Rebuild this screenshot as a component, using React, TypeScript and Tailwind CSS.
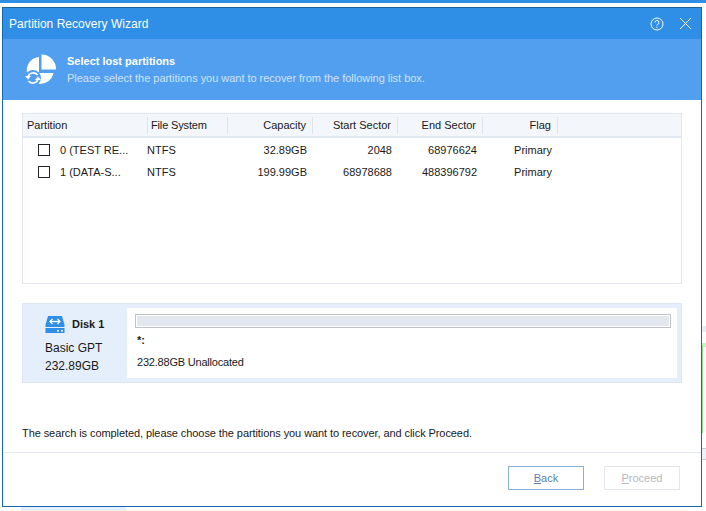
import React from 'react';

const font = 'font-["Liberation_Sans",Arial,sans-serif]';

const columns = [
  { label: 'Partition', width: 'w-[125px]', align: 'text-left pl-[4px]' },
  { label: 'File System', width: 'w-[80px]', align: 'text-left pl-[3px] tracking-[-0.15px]' },
  { label: 'Capacity', width: 'w-[85px]', align: 'text-right pr-[6px]' },
  { label: 'Start Sector', width: 'w-[85px]', align: 'text-right pr-[6px]' },
  { label: 'End Sector', width: 'w-[85px]', align: 'text-right pr-[6px]' },
  { label: 'Flag', width: 'w-[75px]', align: 'text-right pr-[6px]' },
];

const rows = [
  { name: '0 (TEST RE...', fs: 'NTFS', capacity: '32.89GB', start: '2048', end: '68976624', flag: 'Primary' },
  { name: '1 (DATA-S...', fs: 'NTFS', capacity: '199.99GB', start: '68978688', end: '488396792', flag: 'Primary' },
];

const PieIcon = () => (
  <svg width="32" height="32" viewBox="0 0 32 32" fill="none">
    <path d="M14 3 A13.5 13.5 0 1 0 28.5 19 L14 19 Z" fill="#fff" />
    <path d="M16.5 0.5 A14.5 14.5 0 0 1 31 15.5 L16.5 15.5 Z" fill="#fff" />
    <circle cx="8" cy="24" r="8" fill="#529ff0" />
    <path d="M3 22.5 A5.5 5.5 0 0 1 12.5 21" stroke="#fff" strokeWidth="1.6" />
    <path d="M13 25.5 A5.5 5.5 0 0 1 3.5 27" stroke="#fff" strokeWidth="1.6" />
    <path d="M0 22 L6 22 L3 25.5 Z" fill="#fff" />
    <path d="M16 26 L10 26 L13 22.5 Z" fill="#fff" />
  </svg>
);

const DiskIcon = () => (
  <svg width="20" height="17" viewBox="0 0 20 17" fill="none">
    <path d="M3 0 H17 L19.5 9 V11 H0.5 V9 Z" fill="#2f8ee6" />
    <rect x="0.5" y="12" width="19" height="5" fill="#2f8ee6" />
    <path d="M5 5.5 H15" stroke="#fff" strokeWidth="1.3" />
    <path d="M7.5 3 L5 5.5 L7.5 8 M12.5 3 L15 5.5 L12.5 8" stroke="#fff" strokeWidth="1.2" />
    <rect x="12" y="14" width="2" height="1.5" fill="#fff" />
    <rect x="16" y="14" width="2" height="1.5" fill="#fff" />
  </svg>
);

export default function App() {
  return (
    <div className={`relative w-[706px] h-[511px] overflow-hidden bg-white ${font} text-[11px] text-[#1a1a1a]`}>
      {/* windows behind the dialog */}
      <div className="h-[3px] bg-[#2f8ee6]" />
      <div className="absolute right-0 top-[326px] w-[4px] h-[6px] bg-[#e8edf5]" />
      <div className="absolute right-0 top-[343px] w-[4px] h-[90px] border-l border-[#8fe08f] border-t-4 border-t-[#c8f5c8] bg-white" />
      <div className="absolute right-0 top-[448px] w-[4px] h-[12px] border-y border-[#c8cdd5] bg-[#eef1f6]" />
      <div className="absolute left-[21px] bottom-0 w-[105px] h-[4px] bg-[#e6effc]" />

      <div className="relative mt-[4px] ml-[2px] w-[700px] h-[500px] flex flex-col border border-[#1268b3] border-t-[#1c5f9e] bg-white">
        {/* title bar */}
        <div className="h-[31px] shrink-0 flex items-center justify-between bg-[#2f8ee6] pl-[6px] pr-[9px] text-white">
          <span className="text-[12px] tracking-[0.03px]">Partition Recovery Wizard</span>
          <div className="flex items-center gap-[15px]">
            <svg width="14" height="14" viewBox="0 0 14 14" fill="none" stroke="#fff">
              <circle cx="7" cy="7" r="6" />
              <path d="M5 5.5 A2 2 0 1 1 7.5 7.4 Q7 7.7 7 8.6" />
              <path d="M7 9.8 V11" />
            </svg>
            <svg width="13" height="13" viewBox="0 0 13 13" fill="none" stroke="#fff">
              <path d="M1 1 L12 12 M12 1 L1 12" />
            </svg>
          </div>
        </div>

        {/* step banner */}
        <div className="h-[61px] shrink-0 flex items-center bg-[#529ff0] pl-[22px] text-white">
          <PieIcon />
          <div className="ml-[10px] flex flex-col gap-[2px]">
            <span className="text-[11px] font-bold leading-[15px]">Select lost partitions</span>
            <span className="text-[11px] leading-[15px] tracking-[-0.03px] text-[#cfe3fa]">Please select the partitions you want to recover from the following list box.</span>
          </div>
        </div>

        <div className="flex-1 flex flex-col pl-[19px] pr-[19px] pt-[13px]">
          {/* partition list */}
          <div className="h-[171px] shrink-0 border border-[#e3e8ef]">
            <div className="h-[24px] flex items-center bg-[#f3f6fb] border-b-2 border-[#e2e8f2]">
              {columns.map((c) => (
                <div key={c.label} className={`${c.width} ${c.align} h-[17px] leading-[17px] border-r border-[#dfe3ea] whitespace-nowrap`}>
                  {c.label}
                </div>
              ))}
            </div>
            <div className="pt-[1px]">
              {rows.map((r) => (
                <div key={r.name} className="h-[22px] flex items-center">
                  <div className="w-[124px] flex items-center pl-[15px]">
                    <span className="w-[12px] h-[12px] border border-[#222] bg-white" />
                    <span className="ml-[10px] whitespace-nowrap">{r.name}</span>
                  </div>
                  <div className="w-[81px]">{r.fs}</div>
                  <div className="w-[85px] text-right pr-[6px]">{r.capacity}</div>
                  <div className="w-[85px] text-right pr-[6px]">{r.start}</div>
                  <div className="w-[85px] text-right pr-[6px]">{r.end}</div>
                  <div className="w-[75px] text-right pr-[6px]">{r.flag}</div>
                </div>
              ))}
            </div>
          </div>

          {/* disk map */}
          <div className="mt-[19px] h-[80px] shrink-0 flex bg-[#e5effc] border border-[#dde7f4] py-[4px] pr-[4px]">
            <div className="w-[104px] shrink-0 pl-[22px] pt-[7px] text-[12px]">
              <div className="flex items-center gap-[7px] h-[18px]">
                <DiskIcon />
                <span className="text-[11px] font-bold">Disk 1</span>
              </div>
              <div className="mt-[6px] leading-[18px]">Basic GPT</div>
              <div className="leading-[18px]">232.89GB</div>
            </div>
            <div className="flex-1 bg-white pl-[8px] pr-[6px] pt-[6px]">
              <div className="h-[14px] border border-[#bfc2c9] p-[1px]">
                <div className="h-full bg-[#e3e7ef]" />
              </div>
              <div className="mt-[5px] pl-[2px] font-bold leading-[15px]">*:</div>
              <div className="mt-[7px] pl-[2px] leading-[15px] tracking-[-0.2px]">232.88GB Unallocated</div>
            </div>
          </div>

          <div className="mt-[42px] leading-[16px] tracking-[-0.08px]">The search is completed, please choose the partitions you want to recover, and click Proceed.</div>
        </div>

        {/* footer */}
        <div className="h-[54px] shrink-0 flex items-start justify-end gap-[20px] border-t border-[#e3e8ef] pt-[13px] pr-[21px]">
          <button className="w-[76px] h-[24px] border border-[#8aaedd] bg-white text-[#5b7fb5]">
            <span className="underline">B</span>ack
          </button>
          <button className="w-[76px] h-[24px] border border-[#e3e6eb] bg-white text-[#b5b8bd]">
            <span className="underline">P</span>roceed
          </button>
        </div>
      </div>
    </div>
  );
}
